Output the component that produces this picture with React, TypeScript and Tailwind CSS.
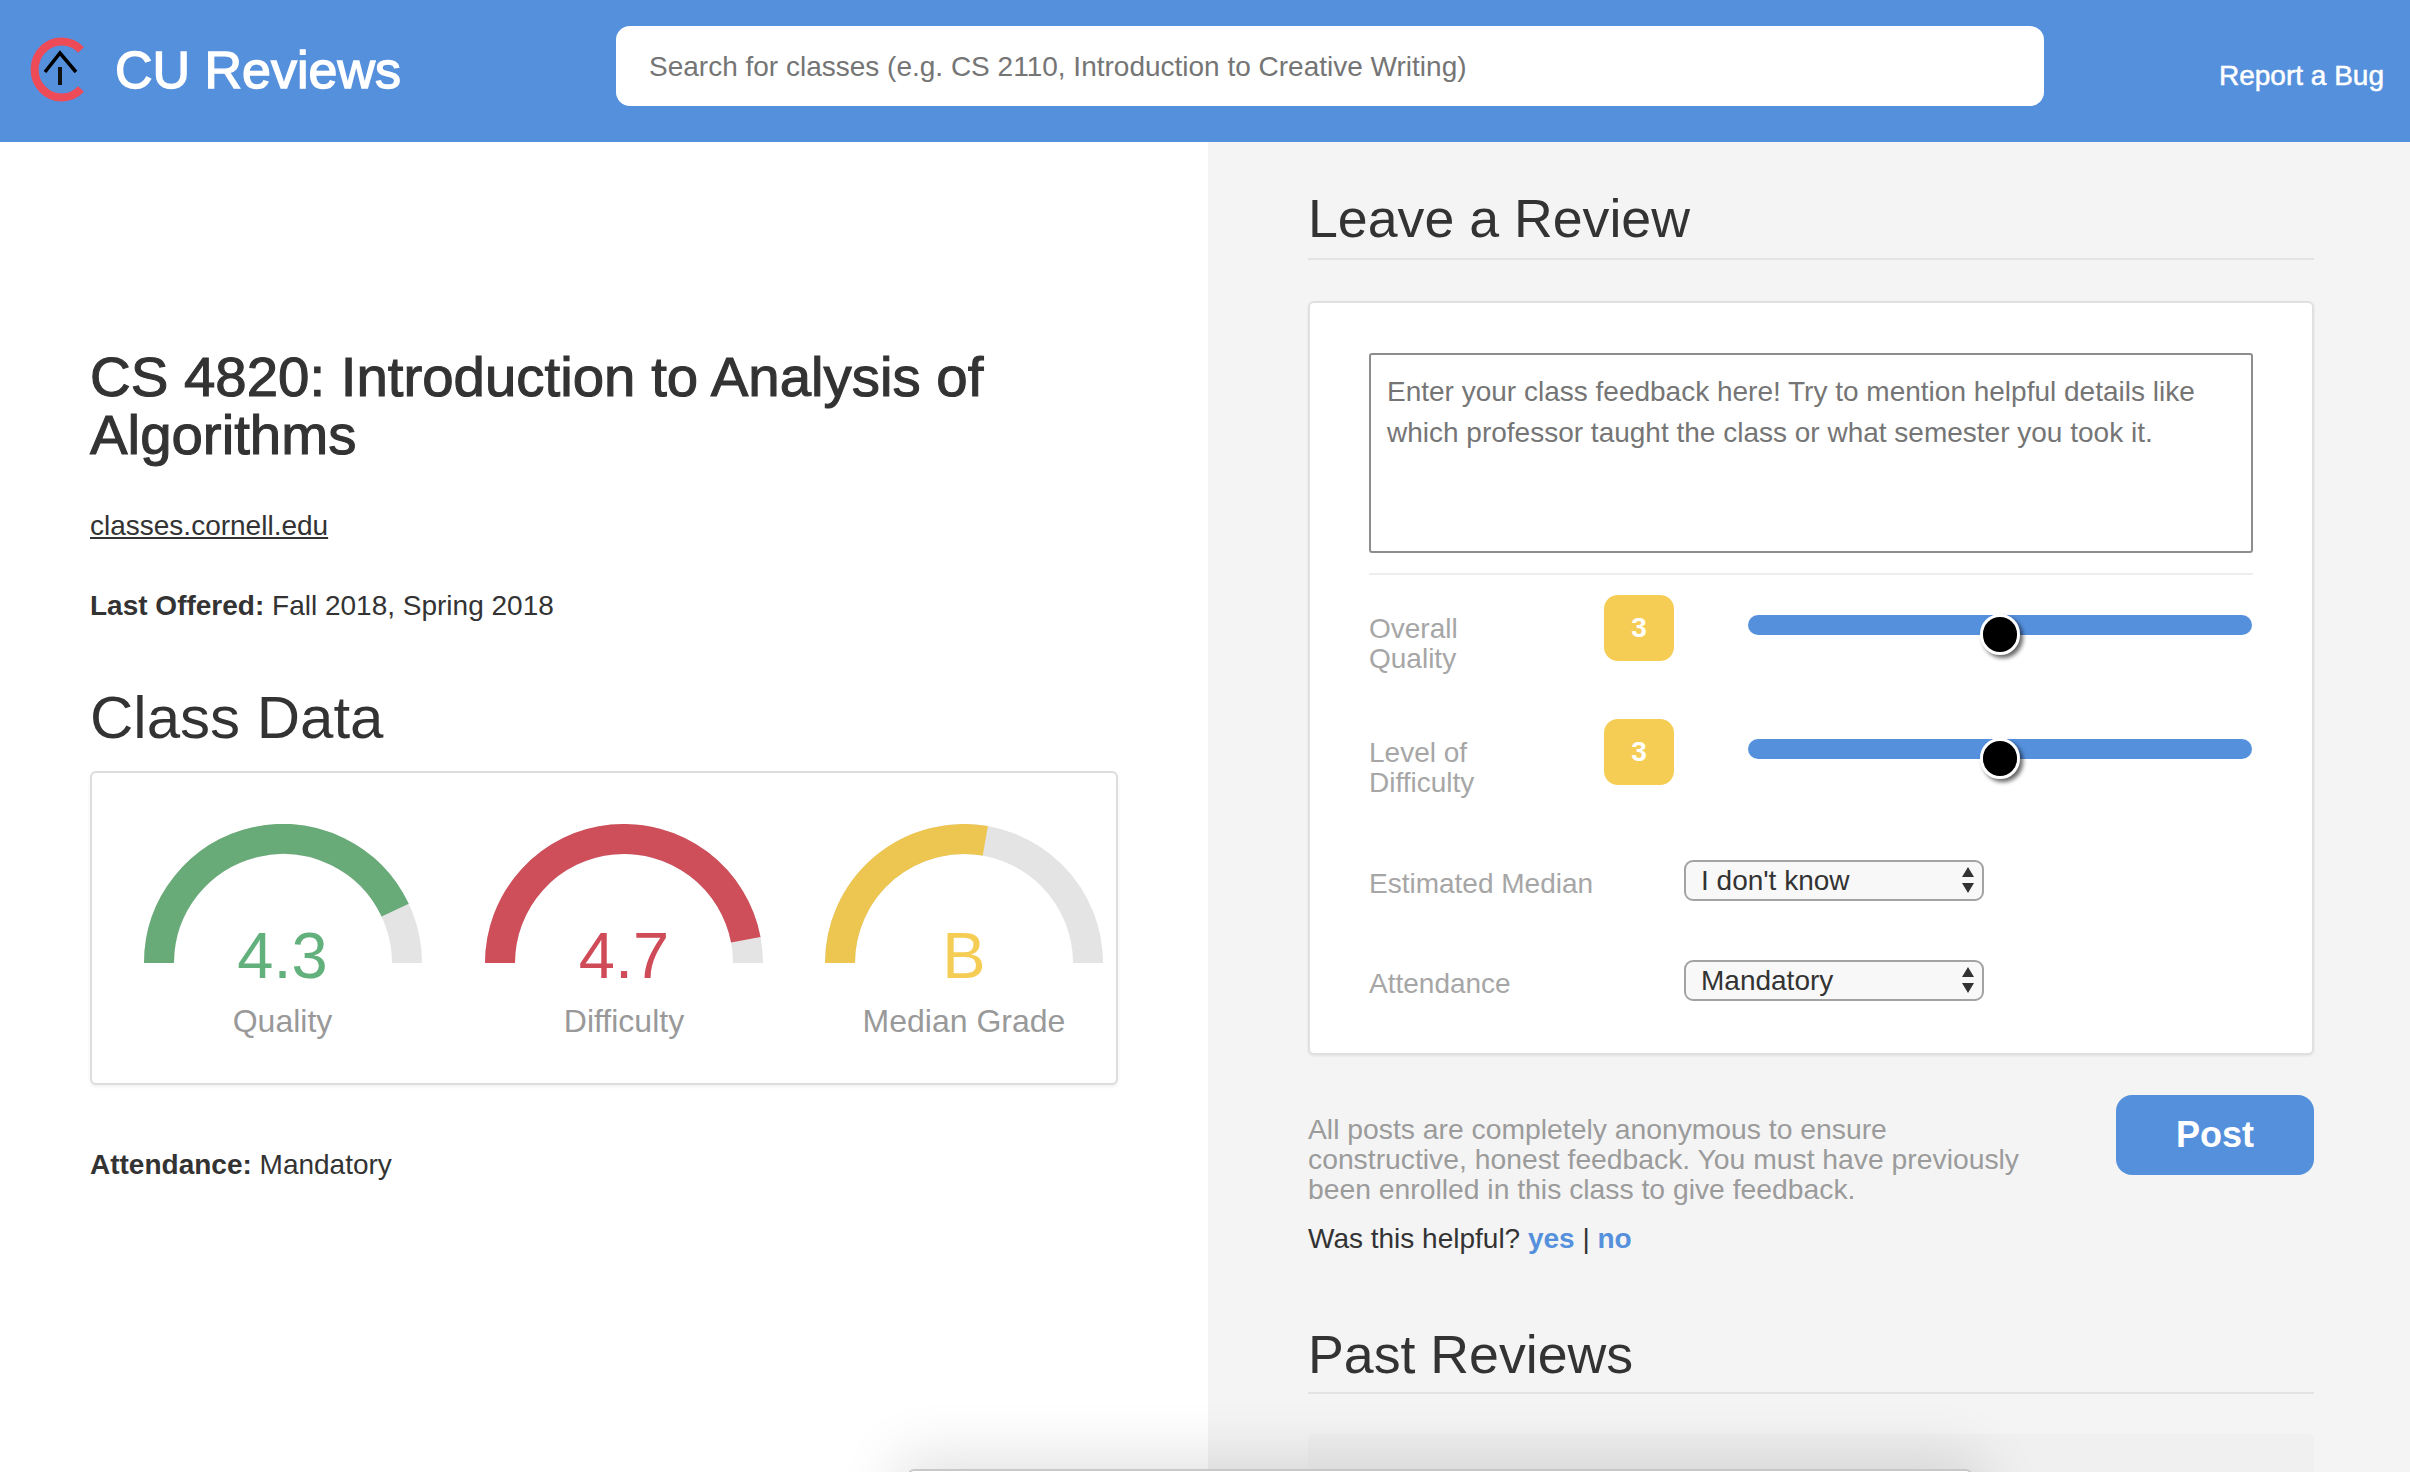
const sans = "font-['Liberation_Sans',Arial,sans-serif]";

function Logo() {
  return (
    <svg width="62" height="66" viewBox="0 0 62 66" className="shrink-0">
      <path d="M55 13 A 27 28 0 1 0 55 52" fill="none" stroke="#ee4b59" strokeWidth="8" />
      <path d="M19 35 L34 16 L50 35" fill="none" stroke="#000" strokeWidth="3.5" />
      <path d="M34 30 V48" fill="none" stroke="#111" strokeWidth="4" />
    </svg>
  );
}

function Gauge({ value, label, fraction, arc, text, width }: { value: string; label: string; fraction: number; arc: string; text: string; width: string }) {
  const r = 124;
  const a = Math.PI * (1 - fraction);
  const x = 139 + r * Math.cos(a);
  const y = 139 - r * Math.sin(a);
  return (
    <div className={`relative flex shrink-0 flex-col items-center ${width}`}>
      <svg width="278" height="140" viewBox="0 0 278 140">
        <path d={`M15 139 A ${r} ${r} 0 0 1 263 139`} fill="none" stroke="#e4e4e4" strokeWidth="30" />
        <path d={`M15 139 A ${r} ${r} 0 0 1 ${x} ${y}`} fill="none" stroke={arc} strokeWidth="30" />
      </svg>
      <div className={`absolute left-0 top-[96px] w-full text-center text-[65px] leading-[72px] ${text}`}>{value}</div>
      <div className="mt-[39px] text-[32px] leading-[36px] text-[#999999]">{label}</div>
    </div>
  );
}

function Rating({ label, top }: { label: [string, string]; top: string }) {
  return (
    <div className={`flex items-start ${top}`}>
      <div className="mt-[19px] w-[235px] text-[28px] leading-[30px] text-[#a6a6a6]">
        {label[0]}
        <br />
        {label[1]}
      </div>
      <div className="flex h-[66px] w-[70px] items-center justify-center rounded-[14px] bg-[#f5cd55] text-[28px] font-bold text-white">3</div>
      <div className="relative ml-[74px] mt-[20px] h-[20px] w-[504px] rounded-[10px] bg-[#5590dd]">
        <div className="absolute left-[232px] top-[-1px] h-[41px] w-[40px] rounded-full border-[3px] border-white bg-black shadow-[3px_3px_4px_rgba(0,0,0,0.6)]" />
      </div>
    </div>
  );
}

function Dropdown({ label, value, top }: { label: string; value: string; top: string }) {
  return (
    <div className={`flex items-center ${top}`}>
      <div className="w-[315px] text-[28px] leading-[30px] text-[#a6a6a6]">{label}</div>
      <div className="relative h-[41px] w-[300px] -translate-y-[3px]">
        <select className="h-full w-full appearance-none rounded-[9px] border-2 border-[#a3a3a3] bg-[#f8f8f8] pl-[15px] text-[28px] leading-[36px] text-[#333333]" defaultValue={value}>
          <option>{value}</option>
        </select>
        <svg width="12" height="26" viewBox="0 0 12 26" className="absolute right-[10px] top-[7px]">
          <path d="M6 0 L12 10 H0 Z M6 26 L0 16 H12 Z" fill="#333" />
        </svg>
      </div>
    </div>
  );
}

export default function App() {
  return (
    <div className={`relative h-[1472px] w-[2410px] overflow-hidden bg-white ${sans}`}>
      <header className="flex h-[142px] items-start bg-[#5590dd]">
        <div className="ml-[26px] mt-[37px]">
          <Logo />
        </div>
        <div className="ml-[27px] mt-[44px] w-[501px] text-[52px] leading-none text-white [-webkit-text-stroke:1.4px_white]">CU Reviews</div>
        <div className="mt-[26px] flex h-[80px] w-[1428px] items-center rounded-[14px] bg-white pl-[33px] pt-[2px] text-[28px] text-[#757575]">
          Search for classes (e.g. CS 2110, Introduction to Creative Writing)
        </div>
        <div className="ml-[175px] mt-[60px] text-[28px] leading-[32px] text-white [-webkit-text-stroke:0.5px_white]">Report a Bug</div>
      </header>

      <main className="flex h-[1330px]">
        <section className="w-[1208px] pl-[90px] pt-[206px] text-[#333333]">
          <h1 className="w-[1000px] text-[56.4px] leading-[58px] [-webkit-text-stroke:1.1px_#333333]">CS 4820: Introduction to Analysis of Algorithms</h1>
          <a className="mt-[45px] block text-[28px] leading-[34px] underline">classes.cornell.edu</a>
          <p className="mt-[46px] text-[28px] leading-[34px]">
            <b>Last Offered:</b> Fall 2018, Spring 2018
          </p>
          <h2 className="mt-[60px] text-[60px] leading-[70px]">Class Data</h2>
          <div className="mt-[18px] flex h-[314px] w-[1028px] rounded-[6px] border-2 border-[#dddddd] bg-white pl-[19px] pt-[51px] shadow-[0_2px_3px_rgba(0,0,0,0.06)]">
            <Gauge width="w-[343px]" value="4.3" label="Quality" fraction={0.86} arc="#68aa78" text="text-[#62b07c]" />
            <Gauge width="w-[340px]" value="4.7" label="Difficulty" fraction={0.94} arc="#ce4e5a" text="text-[#cf4b58]" />
            <Gauge width="w-[340px]" value="B" label="Median Grade" fraction={0.555} arc="#ecc650" text="text-[#f5cd55]" />
          </div>
          <p className="mt-[63px] text-[28px] leading-[34px]">
            <b>Attendance:</b> Mandatory
          </p>
        </section>

        <section className="flex-1 bg-[#f4f4f4] pl-[100px] pr-[96px] pt-[40px] text-[#333333]">
          <h2 className="border-b-2 border-[#e3e3e3] pb-[4px] text-[53.7px] leading-[72px]">Leave a Review</h2>
          <div className="mt-[41px] h-[754px] rounded-[6px] border-2 border-[#e0e0e0] bg-white px-[59px] pt-[50px] shadow-[0_1px_3px_rgba(0,0,0,0.08)]">
            <textarea
              className="h-[200px] w-full resize-none rounded-[3px] border-2 border-[#8d8d8d] bg-white px-[16px] pt-[16px] text-[28px] leading-[41px] placeholder:text-[#757575]"
              placeholder="Enter your class feedback here! Try to mention helpful details like which professor taught the class or what semester you took it."
            />
            <div className="mt-[13px] h-[2px] bg-[#eeeeee]" />
            <Rating label={["Overall", "Quality"]} top="mt-[20px]" />
            <Rating label={["Level of", "Difficulty"]} top="mt-[45px]" />
            <Dropdown label="Estimated Median" value="I don't know" top="mt-[65px]" />
            <Dropdown label="Attendance" value="Mandatory" top="mt-[59px]" />
          </div>
          <div className="mt-[40px] flex justify-between">
            <p className="mt-[19px] w-[730px] text-[28.3px] leading-[30px] text-[#9b9b9b]">All posts are completely anonymous to ensure constructive, honest feedback. You must have previously been enrolled in this class to give feedback.</p>
            <button className="h-[80px] w-[198px] rounded-[16px] bg-[#5590dd] text-[36px] font-bold text-white">Post</button>
          </div>
          <p className="mt-[18px] text-[28px] leading-[34px]">
            Was this helpful? <b className="text-[#5590dd]">yes</b> | <b className="text-[#5590dd]">no</b>
          </p>
          <h2 className="mt-[62px] border-b-2 border-[#e3e3e3] pb-[2px] text-[53.7px] leading-[72px]">Past Reviews</h2>
          <div className="mt-[40px] h-[200px] rounded-[6px] bg-[#f0f0f0]" />
        </section>
      </main>

      <div className="absolute left-[908px] top-[1469px] h-[60px] w-[1064px] rounded-[6px] border-2 border-[#c8c8c8] bg-white shadow-[0_0_60px_12px_rgba(0,0,0,0.12)]" />
    </div>
  );
}
